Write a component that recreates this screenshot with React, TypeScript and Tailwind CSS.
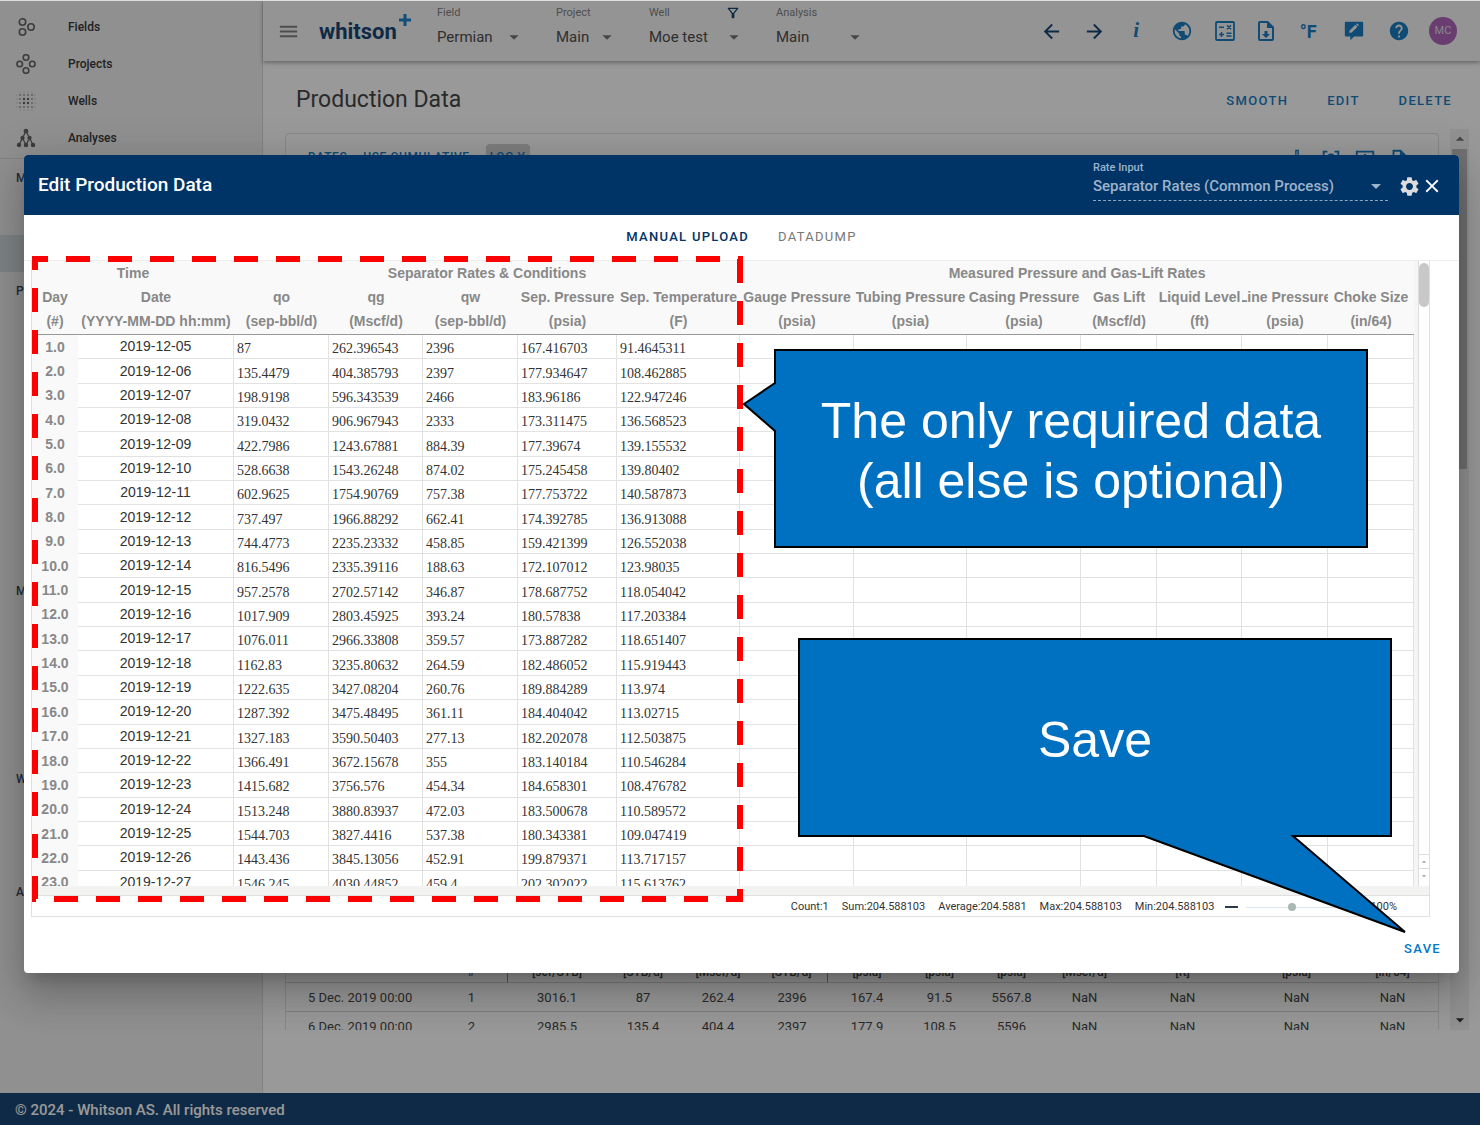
import type { ReactNode } from 'react'
import {
  MdArrowBack,
  MdArrowDropDown,
  MdArrowDropUp,
  MdArrowForward,
  MdClose,
  MdHelp,
  MdMenu,
  MdOutlineFilterAlt,
  MdPublic,
  MdSettings,
} from 'react-icons/md'

const sidebarIcons = {
  fields: (
    <g fill="none" stroke="currentColor" strokeWidth="1.6">
      <circle cx="6.5" cy="5" r="3.2" />
      <circle cx="6.5" cy="15" r="3.2" />
      <circle cx="15" cy="10" r="3.2" />
    </g>
  ),
  projects: (
    <g fill="none" stroke="currentColor" strokeWidth="1.6">
      <circle cx="10" cy="3.5" r="2.8" />
      <circle cx="3.7" cy="10" r="2.8" />
      <circle cx="16.3" cy="10" r="2.8" />
      <circle cx="10" cy="16.5" r="2.8" />
    </g>
  ),
  wells: (
    <g fill="currentColor">
      {[4, 8, 12, 16].map((x) =>
        [4, 8, 12, 16].map((y) => (
          <circle key={`${x}-${y}`} cx={x} cy={y} r={(x === 8 || x === 12) && (y === 8 || y === 12) ? 1.2 : 0.8} />
        )),
      )}
      {[4, 8, 12, 16].map((p) => (
        <g key={p} opacity="0.5">
          <circle cx={p} cy="1" r="0.5" />
          <circle cx={p} cy="19" r="0.5" />
          <circle cx="1" cy={p} r="0.5" />
          <circle cx="19" cy={p} r="0.5" />
        </g>
      ))}
    </g>
  ),
  analyses: (
    <g fill="currentColor" stroke="currentColor" strokeWidth="1.3">
      <path d="M10 3 3 17M10 3l7 14M6.5 10l3.500 7M13.500 10 10 17" fill="none" />
      <circle cx="10" cy="3" r="1.7" />
      <circle cx="6.5" cy="10" r="1.5" />
      <circle cx="13.5" cy="10" r="1.5" />
      <circle cx="3" cy="17" r="1.6" />
      <circle cx="10" cy="17" r="1.6" />
      <circle cx="17" cy="17" r="1.6" />
    </g>
  ),
}

const navItems = [
  { label: 'Fields', icon: sidebarIcons.fields },
  { label: 'Projects', icon: sidebarIcons.projects },
  { label: 'Wells', icon: sidebarIcons.wells },
  { label: 'Analyses', icon: sidebarIcons.analyses },
]

const sheetColumns = [
  { name: 'Day', unit: '(#)', width: 46 },
  { name: 'Date', unit: '(YYYY-MM-DD hh:mm)', width: 156 },
  { name: 'qo', unit: '(sep-bbl/d)', width: 95 },
  { name: 'qg', unit: '(Mscf/d)', width: 94 },
  { name: 'qw', unit: '(sep-bbl/d)', width: 95 },
  { name: 'Sep. Pressure', unit: '(psia)', width: 99 },
  { name: 'Sep. Temperature', unit: '(F)', width: 123 },
  { name: 'Gauge Pressure', unit: '(psia)', width: 114 },
  { name: 'Tubing Pressure', unit: '(psia)', width: 113 },
  { name: 'Casing Pressure', unit: '(psia)', width: 114 },
  { name: 'Gas Lift', unit: '(Mscf/d)', width: 76 },
  { name: 'Liquid Level', unit: '(ft)', width: 85 },
  { name: 'Line Pressure', unit: '(psia)', width: 86 },
  { name: 'Choke Size', unit: '(in/64)', width: 86 },
]

const sheetRows = [
  ['2019-12-05', '87', '262.396543', '2396', '167.416703', '91.4645311'],
  ['2019-12-06', '135.4479', '404.385793', '2397', '177.934647', '108.462885'],
  ['2019-12-07', '198.9198', '596.343539', '2466', '183.96186', '122.947246'],
  ['2019-12-08', '319.0432', '906.967943', '2333', '173.311475', '136.568523'],
  ['2019-12-09', '422.7986', '1243.67881', '884.39', '177.39674', '139.155532'],
  ['2019-12-10', '528.6638', '1543.26248', '874.02', '175.245458', '139.80402'],
  ['2019-12-11', '602.9625', '1754.90769', '757.38', '177.753722', '140.587873'],
  ['2019-12-12', '737.497', '1966.88292', '662.41', '174.392785', '136.913088'],
  ['2019-12-13', '744.4773', '2235.23332', '458.85', '159.421399', '126.552038'],
  ['2019-12-14', '816.5496', '2335.39116', '188.63', '172.107012', '123.98035'],
  ['2019-12-15', '957.2578', '2702.57142', '346.87', '178.687752', '118.054042'],
  ['2019-12-16', '1017.909', '2803.45925', '393.24', '180.57838', '117.203384'],
  ['2019-12-17', '1076.011', '2966.33808', '359.57', '173.887282', '118.651407'],
  ['2019-12-18', '1162.83', '3235.80632', '264.59', '182.486052', '115.919443'],
  ['2019-12-19', '1222.635', '3427.08204', '260.76', '189.884289', '113.974'],
  ['2019-12-20', '1287.392', '3475.48495', '361.11', '184.404042', '113.02715'],
  ['2019-12-21', '1327.183', '3590.50403', '277.13', '182.202078', '112.503875'],
  ['2019-12-22', '1366.491', '3672.15678', '355', '183.140184', '110.546284'],
  ['2019-12-23', '1415.682', '3756.576', '454.34', '184.658301', '108.476782'],
  ['2019-12-24', '1513.248', '3880.83937', '472.03', '183.500678', '110.589572'],
  ['2019-12-25', '1544.703', '3827.4416', '537.38', '180.343381', '109.047419'],
  ['2019-12-26', '1443.436', '3845.13056', '452.91', '199.879371', '113.717157'],
  ['2019-12-27', '1546.245', '4030.44852', '459.4', '202.302022', '115.613762'],
]

const resultColumns = [
  { unit: '', width: 149 },
  { unit: '#', width: 73 },
  { unit: '[scf/STB]', width: 98 },
  { unit: '[STB/d]', width: 74 },
  { unit: '[Mscf/d]', width: 76 },
  { unit: '[STB/d]', width: 72 },
  { unit: '[psia]', width: 78 },
  { unit: '[psia]', width: 67 },
  { unit: '[psia]', width: 77 },
  { unit: '[Mscf/d]', width: 69 },
  { unit: '[ft]', width: 127 },
  { unit: '[psia]', width: 101 },
  { unit: '[in/64]', width: 91 },
]

const resultRows = [
  ['5 Dec. 2019 00:00', '1', '3016.1', '87', '262.4', '2396', '167.4', '91.5', '5567.8', 'NaN', 'NaN', 'NaN', 'NaN'],
  ['6 Dec. 2019 00:00', '2', '2985.5', '135.4', '404.4', '2397', '177.9', '108.5', '5596', 'NaN', 'NaN', 'NaN', 'NaN'],
]

const stats = ['Count:1', 'Sum:204.588103', 'Average:204.5881', 'Max:204.588103', 'Min:204.588103']

function Glyph({ d, className = 'size-[22px]' }: { d: string; className?: string }) {
  return (
    <svg viewBox="0 0 24 24" fill="currentColor" className={className} aria-hidden="true">
      <path d={d} fillRule="evenodd" />
    </svg>
  )
}

function HeaderSelect({ id, label, value, className, extra }: { id: string; label: string; value: string; className: string; extra?: ReactNode }) {
  return (
    <div className={className}>
      <div className="flex h-4 items-center justify-between text-[11px] leading-4 text-[#757575]">
        <label htmlFor={id}>{label}</label>
        {extra}
      </div>
      <div className="relative mt-1.5 flex items-center">
        <select id={id} className="w-full appearance-none bg-transparent text-[15px] leading-5 text-[#3a3a3a] outline-none">
          <option>{value}</option>
        </select>
        <MdArrowDropDown className="pointer-events-none absolute right-0 size-[22px] text-[#666]" />
      </div>
    </div>
  )
}

function Sidebar() {
  return (
    <aside className="w-[263px] shrink-0 border-r border-[#d6d6d8] bg-[#eeeef0] text-[12px] font-medium text-[#222]">
      <nav className="border-b border-[#d6d6d8] pt-2 pb-0.5">
        {navItems.map((item) => (
          <a key={item.label} href="#" className="flex h-[37px] items-center gap-8 pl-4">
            <svg viewBox="0 0 20 20" className="size-5 text-[#555]" aria-hidden="true">
              {item.icon}
            </svg>
            {item.label}
          </a>
        ))}
      </nav>
      <div className="text-[#1f3550]">
        <div className="h-[76px] px-4 pt-2.5">M</div>
        <div className="h-[37px] bg-[#cfd8dd]" />
        <div className="h-[300px] px-4 pt-2.5">P</div>
        <div className="h-[188px] px-4 pt-2.5">M</div>
        <div className="h-[113px] px-4 pt-2.5">W</div>
        <div className="px-4 pt-2.5">A</div>
      </div>
    </aside>
  )
}

function TopBar() {
  return (
    <header className="relative z-10 flex h-[61px] shrink-0 items-start bg-[#f5f5f5] pr-[23px] pl-3.5 shadow-[0_2px_4px_rgba(0,0,0,0.35)]">
      <button type="button" aria-label="Menu" className="mt-5 text-[#757575]">
        <MdMenu className="size-[23px]" />
      </button>
      <a href="#" className="relative mt-[18px] ml-[19px] w-[118px] text-[22px] leading-7 font-bold text-[#003366]">
        whitson
        <svg viewBox="0 0 12 12" className="absolute -top-1 left-20 size-3" aria-hidden="true">
          <path d="M6 0v12M0 6h12" stroke="#0078c8" strokeWidth="3" />
        </svg>
      </a>
      <div className="flex gap-[31px] pt-[5px]">
        <HeaderSelect id="field" label="Field" value="Permian" className="w-[88px]" />
        <HeaderSelect id="project" label="Project" value="Main" className="w-[62px]" />
        <HeaderSelect
          id="well"
          label="Well"
          value="Moe test"
          className="w-[96px]"
          extra={<MdOutlineFilterAlt className="mr-1 size-4 text-[#003366]" />}
        />
        <HeaderSelect id="analysis" label="Analysis" value="Main" className="w-[90px]" />
      </div>
      <div className="mt-[17px] ml-auto flex w-[420px] justify-between text-[#0070bb] *:flex *:size-7 *:items-center *:justify-center">
        <button type="button" aria-label="Back" className="text-[#003366]">
          <MdArrowBack className="size-[23px]" />
        </button>
        <button type="button" aria-label="Forward" className="text-[#003366]">
          <MdArrowForward className="size-[23px]" />
        </button>
        <button type="button" className="pr-1 font-['Liberation_Serif',serif] text-[21px] font-bold italic">
          i
        </button>
        <button type="button" aria-label="Language">
          <MdPublic className="size-[22px]" />
        </button>
        <button type="button" aria-label="Calculator">
          <svg viewBox="0 0 20 20" className="size-5" fill="none" stroke="currentColor" aria-hidden="true">
            <rect x="1" y="1" width="18" height="18" rx="1" strokeWidth="1.8" />
            <path d="M4 6.3h5M4 13.500h5M6.500 11v5M11.500 12.200h5M11.500 15h5M12 4.300l4 4M16 4.300l-4 4" strokeWidth="1.5" />
          </svg>
        </button>
        <button type="button" aria-label="Download file" className="pr-1.5">
          <Glyph className="size-6 shrink-0" d="M14 2H6a2 2 0 0 0-2 2v16a2 2 0 0 0 2 2h12a2 2 0 0 0 2-2V8l-6-6M18 20H6V4h7v5h5v11M12 19l-4-4h2.500v-3h3v3H16l-4 4Z" />
        </button>
        <button type="button" className="pr-2 text-[18px] font-bold">
          °F
        </button>
        <button type="button" aria-label="Feedback" className="pr-1">
          <Glyph d="M21 2H3a1 1 0 0 0-1 1v14a1 1 0 0 0 1 1h5v4l4-4h9a1 1 0 0 0 1-1V3a1 1 0 0 0-1-1M7 14v-2.200l6.500-6.500 2.200 2.200L9.200 14H7M16.400 6.800l-2.200-2.200 1-1 2.200 2.200-1 1Z" />
        </button>
        <button type="button" aria-label="Help">
          <MdHelp className="size-[22px]" />
        </button>
        <button type="button" className="rounded-full bg-[#a855b5] text-[11px] text-[#ddd]">
          MC
        </button>
      </div>
    </header>
  )
}

function ProductionPage() {
  return (
    <main className="flex min-h-0 flex-1 flex-col bg-white pb-[63px]">
      <div className="flex h-[68px] shrink-0 items-center justify-between pt-2.5 pr-7 pl-[33px]">
        <h1 className="text-[23px] text-[#333]">Production Data</h1>
        <div className="flex gap-[39px] pt-0.5 text-[13px] font-medium tracking-widest text-[#0070bb]">
          <button type="button">SMOOTH</button>
          <button type="button">EDIT</button>
          <button type="button">DELETE</button>
        </div>
      </div>
      <div className="flex min-h-0 flex-1 gap-[11px] overflow-hidden pr-[11px] pl-[22px]">
        <div className="mt-1 min-w-0 flex-1 rounded-t border border-b-0 border-[#e0e0e0]">
          <div className="flex h-[60px] items-start pt-2.5 pl-[22px] text-[12px] font-medium tracking-wider text-[#0070bb]">
            <button type="button" className="py-1">DATES</button>
            <button type="button" className="ml-4 py-1">USE CUMULATIVE</button>
            <button type="button" className="ml-4 rounded bg-[#ccc] px-1 py-1">LOG Y</button>
            <div className="mt-1 mr-7 ml-auto flex gap-3">
              <Glyph d="M10 2v7H6l6 7 6-7h-4V2h-4M11.500 3.500h1v7H15l-3 3.500-3-3.500h2.500Z" />
              <Glyph d="M3 3h5v2H5v3H3V3M16 3h5v5h-2V5h-3V3M12 6a5 5 0 1 1 0 10 5 5 0 0 1 0-10M12 8a3 3 0 1 0 0 6 3 3 0 0 0 0-6Z" />
              <Glyph d="M2 3h20v16H2V3M4 5v12h16V5H4M11 16V10H8l4-4 4 4h-3v6h-2Z" />
              <Glyph d="M5 2h9l6 6v14H5V2M7 4v16h11V9h-5V4H7Z" />
            </div>
          </div>
          <div className="h-[761px]" />
          <table className="w-full table-fixed border-separate border-spacing-0 text-center text-[13px] text-[#333]">
            <colgroup>
              {resultColumns.map((col, i) => (
                <col key={i} style={{ width: col.width }} />
              ))}
            </colgroup>
            <thead>
              <tr className="h-7 text-[12px]">
                {resultColumns.map((col, i) => (
                  <th
                    key={i}
                    className={`border-b border-[#d0d0d0] pt-1.5 font-medium ${i === 1 || i === 5 ? 'border-r border-r-[#888]' : ''}`}
                  >
                    {col.unit}
                  </th>
                ))}
              </tr>
            </thead>
            <tbody>
              {resultRows.map((row) => (
                <tr key={row[0]} className="h-[29px]">
                  {row.map((cell, i) => (
                    <td key={i} className={`border-b border-[#d0d0d0] pt-0.5 ${i === 0 ? 'pl-[22px] text-left' : ''}`}>
                      {cell}
                    </td>
                  ))}
                </tr>
              ))}
            </tbody>
          </table>
        </div>
        <div className="flex w-[19px] shrink-0 flex-col items-center justify-between bg-[#f1f1f1] text-[#666]">
          <MdArrowDropUp className="size-5" />
          <div className="mb-auto h-[320px] w-[15px] bg-[#b5b5b5]" />
          <MdArrowDropDown className="size-5 text-[#222]" />
        </div>
      </div>
    </main>
  )
}

function Sheet() {
  return (
    <div className="mr-[29px] ml-[7px] border border-t-0 border-[#e0e0e0]">
      <div className="flex h-[625px] overflow-hidden">
        <div className="min-w-0 flex-1 border-r-[5px] border-[#f5f5f5]">
          <table className="h-[634px] w-full table-fixed border-separate border-spacing-0 font-['Liberation_Sans',Arial,sans-serif] text-[14px] text-[#333]">
            <colgroup>
              {sheetColumns.map((col) => (
                <col key={col.name} style={{ width: col.width }} />
              ))}
            </colgroup>
            <thead className="bg-[#f9f9f9] text-[#888]">
              <tr className="h-6">
                <th colSpan={2} className="p-0 leading-5">Time</th>
                <th colSpan={5} className="p-0 leading-5">Separator Rates &amp; Conditions</th>
                <th colSpan={7} className="p-0 leading-5">Measured Pressure and Gas-Lift Rates</th>
              </tr>
              <tr className="h-6">
                {sheetColumns.map((col) => (
                  <th key={col.name} className="p-0">
                    <span className="flex justify-center overflow-hidden whitespace-nowrap">{col.name}</span>
                  </th>
                ))}
              </tr>
              <tr className="h-[26px]">
                {sheetColumns.map((col) => (
                  <th key={col.name} className="border-b border-[#999] p-0">
                    <span className="flex justify-center whitespace-nowrap">{col.unit}</span>
                  </th>
                ))}
              </tr>
            </thead>
            <tbody>
              {sheetRows.map((row, r) => (
                <tr key={row[0]}>
                  <th className="bg-[#f9f9f9] p-0 leading-[23px] text-[#888]">{r + 1}.0</th>
                  {sheetColumns.slice(1).map((col, c) =>
                    c === 0 ? (
                      <td key={col.name} className="border-r border-b border-[#e2e2e2] p-0 text-center leading-[23px]">
                        {row[0]}
                      </td>
                    ) : (
                      <td
                        key={col.name}
                        className="border-r border-b border-[#e2e2e2] px-[3px] pt-[5px] pb-0 font-['Liberation_Serif',serif] leading-[18px]"
                      >
                        {row[c]}
                      </td>
                    ),
                  )}
                </tr>
              ))}
            </tbody>
          </table>
        </div>
        <div className="flex w-[11px] flex-col justify-between border-l border-[#ddd] pt-0.5 text-[#999]">
          <div className="h-11 rounded-full bg-[#c8c8c8]" />
          <div className="mb-1">
            <button type="button" aria-label="Scroll up" className="flex h-[14px] w-full items-center justify-center border-t border-[#ddd]">
              <MdArrowDropUp className="size-2.5" />
            </button>
            <button type="button" aria-label="Scroll down" className="flex h-[14px] w-full items-center justify-center border-t border-[#ddd]">
              <MdArrowDropDown className="size-2.5" />
            </button>
          </div>
        </div>
      </div>
      <div className="h-2.5 border-b border-[#e0e0e0] bg-[#f3f3f2]" />
      <div className="flex h-5 items-center justify-end pt-0.5 pr-8 text-[11px] text-[#333]">
        <div className="flex gap-[13px]">
          {stats.map((stat) => (
            <span key={stat}>{stat}</span>
          ))}
        </div>
        <button type="button" aria-label="Zoom out" className="mr-2 ml-[11px] h-0.5 w-[13px] bg-[#2b3a4d]" />
        <input
          type="range"
          aria-label="Zoom"
          defaultValue={50}
          className="h-px w-[92px] appearance-none bg-[#dde3ea] [&::-webkit-slider-thumb]:size-2 [&::-webkit-slider-thumb]:appearance-none [&::-webkit-slider-thumb]:rounded-full [&::-webkit-slider-thumb]:bg-[#aab8b3]"
        />
        <span className="ml-8">100%</span>
      </div>
    </div>
  )
}

/* Training annotations drawn on top of the dialog */
function Annotations() {
  return (
    <div className="pointer-events-none absolute inset-0 font-['Liberation_Sans',Arial,sans-serif] text-[50px] leading-[60px] text-white">
      <svg className="absolute top-[101px] left-2 h-[646px] w-[711px]" aria-hidden="true">
        <path d="M708 3V643H3V3Z" fill="none" stroke="#ff0000" strokeWidth="6" strokeDasharray="24 18" />
      </svg>
      <div className="absolute top-[195px] left-[751px] flex h-[197px] w-[592px] items-center justify-center pt-1 text-center">
        <svg className="absolute top-0 left-0 size-full overflow-visible" aria-hidden="true">
          <path d="M0 0H592V197H0V81L-31 54L0 33Z" fill="#0070c0" stroke="#000" strokeWidth="2" />
        </svg>
        <p className="relative">
          The only required data
          <br />
          (all else is optional)
        </p>
      </div>
      <div className="absolute top-[484px] left-[775px] flex h-[197px] w-[592px] items-center justify-center pt-1">
        <svg className="absolute top-0 left-0 size-full overflow-visible" aria-hidden="true">
          <path d="M0 0H592V197H494L606 293L345 197H0Z" fill="#0070c0" stroke="#000" strokeWidth="2" />
        </svg>
        <p className="relative">Save</p>
      </div>
    </div>
  )
}

function EditDialog() {
  return (
    <section
      role="dialog"
      aria-labelledby="dialog-title"
      className="relative rounded bg-white shadow-[0_11px_15px_-7px_rgba(0,0,0,0.2),0_24px_38px_3px_rgba(0,0,0,0.14),0_9px_46px_8px_rgba(0,0,0,0.12)]"
    >
      <header className="flex h-[60px] items-center rounded-t bg-[#003366] pr-4 pl-3.5">
        <h2 id="dialog-title" className="text-[19px] font-medium text-white">
          Edit Production Data
        </h2>
        <div className="relative mb-2.5 ml-auto w-[295px] border-b border-dashed border-[#8ea6c0] text-[#9db3cb]">
          <label htmlFor="rate-input" className="block text-[11px] leading-4 font-medium">
            Rate Input
          </label>
          <select
            id="rate-input"
            className="mb-1 block w-full appearance-none bg-transparent text-[15px] leading-5 font-medium outline-none"
          >
            <option>Separator Rates (Common Process)</option>
          </select>
          <MdArrowDropDown className="pointer-events-none absolute right-0 bottom-0.5 size-6" />
        </div>
        <button type="button" aria-label="Settings" className="mt-0.5 ml-2.5 text-[#dcdcdc]">
          <MdSettings className="size-[23px]" />
        </button>
        <button type="button" aria-label="Close" className="mt-0.5 text-white">
          <MdClose className="size-[22px]" />
        </button>
      </header>
      <div role="tablist" className="flex h-[46px] items-center justify-center gap-[29px] border-b border-[#eee] pb-0.5 text-[13px] tracking-widest">
        <button type="button" role="tab" aria-selected="true" className="font-medium text-[#003366]">
          MANUAL UPLOAD
        </button>
        <button type="button" role="tab" aria-selected="false" className="text-[#777]">
          DATADUMP
        </button>
      </div>
      <Sheet />
      <footer className="flex h-14 items-center justify-end pt-2 pr-[18px]">
        <button type="button" className="text-[13px] font-medium tracking-widest text-[#0078c8]">
          SAVE
        </button>
      </footer>
      <Annotations />
    </section>
  )
}

function App() {
  return (
    <div className="relative h-screen overflow-hidden font-[Roboto,sans-serif]">
      <div className="flex h-full flex-col">
        <div className="flex min-h-0 flex-1">
          <Sidebar />
          <div className="flex min-w-0 flex-1 flex-col">
            <TopBar />
            <ProductionPage />
          </div>
        </div>
        <footer className="flex h-8 shrink-0 items-center bg-[#003366] px-[15px] pt-0.5 text-[15px] font-medium text-white">
          © 2024 - Whitson AS. All rights reserved
        </footer>
      </div>
      <div className="absolute inset-0 z-20 border-t border-[#dde0dd] bg-[#212121]/46 pt-[154px] pr-[21px] pl-6">
        <EditDialog />
      </div>
    </div>
  )
}

export default App
